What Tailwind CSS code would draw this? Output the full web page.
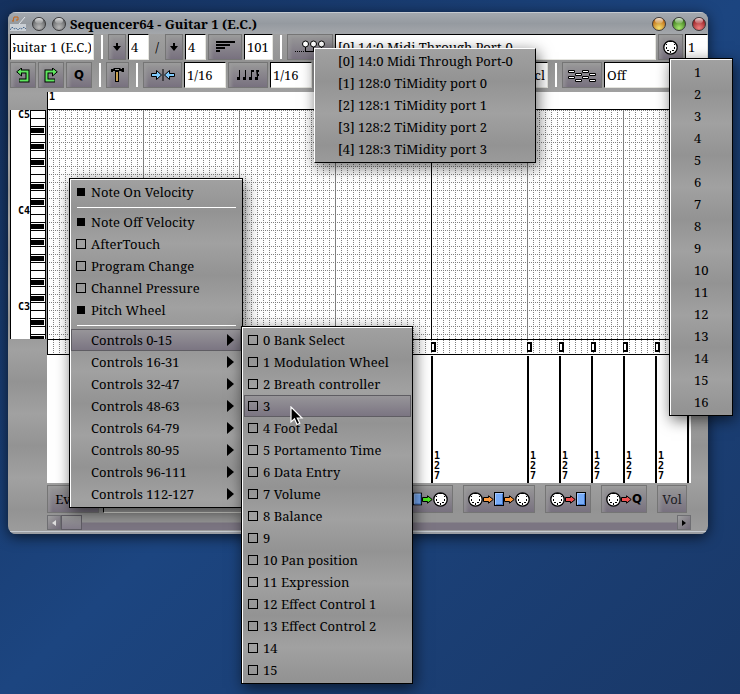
<!DOCTYPE html>
<html lang="en">
<head>
<meta charset="utf-8">
<title>Sequencer64 - Guitar 1 (E.C.)</title>
<script src="https://cdn.jsdelivr.net/npm/@tailwindcss/browser@4"></script>
</head>
<body class="bg-[#1a3d72] font-['Noto_Serif','Droid_Serif','DejaVu_Serif_Condensed','DejaVu_Serif',serif] text-[13px] leading-5 text-black">
<svg width="0" height="0" class="absolute">
  <defs>
    <symbol id="din" viewBox="0 0 15 15">
      <circle cx="7.500" cy="7.500" r="6.700" fill="#fff" stroke="#000" stroke-width="1.300"/>
      <path d="M3 7h1v2H3zM11 7h1v2h-1zM4 10h2v1H4zM9 10h2v1H9zM7 11h1v2H7zM6 1h3v1H6zM3 4h1v1H3zM11 4h1v1h-1z"/>
    </symbol>
    <symbol id="arrow" viewBox="0 0 11 9">
      <path d="M.5 2.500h5V.8L10.200 4.500 5.500 8.200V6.500h-5z" stroke="#000" stroke-width="1"/>
    </symbol>
    <symbol id="block" viewBox="0 0 10 14">
      <rect x=".5" y=".5" width="9" height="13" fill="#78acf8" stroke="#000"/>
      <path d="M1.500 12.500v-11h7" fill="none" stroke="#a9cbff"/>
      <path d="M8.500 2v10.500H2" fill="none" stroke="#3f73c8"/>
    </symbol>
    <pattern id="dots" width="6" height="8" patternUnits="userSpaceOnUse">
      <path d="M0 0h1v1H0zM2 0h1v1H2zM4 0h1v1H4zM0 2h1v1H0zM0 4h1v1H0zM0 6h1v1H0z" fill="#808080"/>
    </pattern>
    <pattern id="steps" width="6" height="2" patternUnits="userSpaceOnUse">
      <path d="M0 0h1v1H0z" fill="#808080"/>
    </pattern>
    <pattern id="octave" width="16" height="96" patternUnits="userSpaceOnUse">
      <rect width="16" height="96" fill="#fff"/>
      <path d="M0 0h16v1H0zM0 8h16v1H0zM0 16h16v1H0zM0 24h16v1H0zM0 32h16v1H0zM0 40h16v1H0zM0 48h16v1H0zM0 56h16v1H0zM0 64h16v1H0zM0 72h16v1H0zM0 80h16v1H0zM0 88h16v1H0zM0 0h1v96H0zM15 0h1v96h-1z"/>
      <path d="M1 18h13v5H1zM1 34h13v5H1zM1 50h13v5H1zM1 74h13v5H1zM1 90h13v5H1z"/>
    </pattern>
    <radialGradient id="gray" cx=".5" cy=".75" r=".7"><stop offset="0" stop-color="#b8b8b8"/><stop offset="1" stop-color="#5c5e60"/></radialGradient>
    <radialGradient id="amber" cx=".5" cy=".8" r=".75"><stop offset="0" stop-color="#f4e070"/><stop offset="1" stop-color="#b85c08"/></radialGradient>
    <radialGradient id="green" cx=".5" cy=".8" r=".75"><stop offset="0" stop-color="#a8e870"/><stop offset="1" stop-color="#2c6c10"/></radialGradient>
    <radialGradient id="red" cx=".5" cy=".8" r=".75"><stop offset="0" stop-color="#f08080"/><stop offset="1" stop-color="#8c1418"/></radialGradient>
    <linearGradient id="gloss" x2="0" y2="1"><stop offset="0" stop-color="#fff" stop-opacity=".85"/><stop offset="1" stop-color="#fff" stop-opacity=".1"/></linearGradient>
    <symbol id="lens" viewBox="0 0 16 16">
      <circle cx="8" cy="8" r="6.500" stroke="#3a3a3c" stroke-width="1"/>
      <ellipse cx="8" cy="4.800" rx="4" ry="2.800" fill="url(#gloss)"/>
    </symbol>
  </defs>
</svg>

<main class="relative min-h-screen overflow-hidden bg-linear-to-br from-[#15315e] via-[#1c4580] to-[#193868] pt-3">
  <section class="ml-2 mr-8 overflow-hidden rounded-lg bg-[repeating-linear-gradient(#999999_0,#a1a1a1_18px,#939393_50px,#999999_64px)] shadow-[0_3px_14px_rgba(0,0,0,0.65)]">
    <header class="flex h-[22px] items-center border-t border-[#c5cad0] bg-linear-to-b from-[#a3a8ae] via-[#959aa0] to-[#a4a7ab] pl-0.5 pr-px">
      <svg width="16" height="16" class="mr-px">
        <rect y="8" width="16" height="7" fill="#c9ced4"/>
        <path d="M0 14l2-3 2 2 2-1 2 2 2-2 2 1 2-2 2 2" fill="none" stroke="#42648c" stroke-dasharray="2 1"/>
        <path d="M9 8l6-7" stroke="#e4e8ec"/>
        <path d="M3 5l1-4h4v3M2 5h2M6 4h2" fill="none" stroke="#c86414"/>
      </svg>
      <button aria-label="Window menu" class="ml-0.5 size-5"><svg width="16" height="16" fill="url(#gray)" class="mx-auto"><use href="#lens"/></svg></button>
      <button aria-label="Stick" class="size-5"><svg width="16" height="16" fill="url(#gray)" class="mx-auto"><use href="#lens"/></svg></button>
      <h1 class="flex-1 pl-px text-[13px] font-bold">Sequencer64 - Guitar 1 (E.C.)</h1>
      <div class="flex pr-0">
        <button aria-label="Minimize" class="size-5"><svg width="16" height="16" fill="url(#amber)" class="ml-auto"><use href="#lens"/></svg></button>
        <button aria-label="Maximize" class="size-5"><svg width="16" height="16" fill="url(#green)" class="ml-auto"><use href="#lens"/></svg></button>
        <button aria-label="Close" class="size-5"><svg width="16" height="16" fill="url(#red)" class="ml-auto"><use href="#lens"/></svg></button>
      </div>
    </header>

    <div class="flex flex-col gap-0.5 pb-1 [&_button]:flex [&_button]:h-[26px] [&_button]:shrink-0 [&_button]:items-center [&_button]:justify-center [&_button]:border [&_button]:border-[#757575] [&_button]:bg-linear-to-b [&_button]:from-[#999999] [&_button]:to-[#78717f] [&_button]:shadow-[inset_3px_2px_3px_rgba(160,160,160,0.5)] [&_hr]:ml-[5px] [&_hr]:mr-[3px] [&_hr]:h-6 [&_hr]:w-0.5 [&_hr]:border-0 [&_hr]:bg-white [&_input]:h-[26px] [&_input]:min-w-0 [&_input]:border [&_input]:border-b-[#e4e4de] [&_input]:border-l-black [&_input]:border-r-[#e4e4de] [&_input]:border-t-black [&_input]:bg-white [&_input]:px-0.5">
      <div class="flex items-center gap-0.5 pl-0.5">
        <input aria-label="Sequence name" value="Guitar 1 (E.C.)" class="w-[84px] -indent-[6px]">
        <hr>
        <button aria-label="Beats per bar" class="w-[18px]"><svg width="8" height="8"><path d="M3 0h2v3h3L4 8 0 3h3z"/></svg></button>
        <input aria-label="Beats" value="4" class="w-[21px]">
        <span class="w-3 text-center">/</span>
        <button aria-label="Beat length" class="w-[18px]"><svg width="8" height="8"><path d="M3 0h2v3h3L4 8 0 3h3z"/></svg></button>
        <input aria-label="Beat unit" value="4" class="w-[21px]">
        <button aria-label="Measures" class="w-[34px]"><svg width="19" height="12"><path d="M0 0h19v2H0zM0 3h14v2H0zM0 6h9v2H0zM0 9h4v2H0z"/></svg></button>
        <input aria-label="Measure count" value="101" class="w-[29px]">
        <hr>
        <button aria-label="Output bus" class="w-[46px]"><svg width="30" height="14"><path d="M0 11.500h10" stroke="#000" stroke-dasharray="1 1"/><path d="M10 11.500h10M10.500 7v4M18.500 7v4M26.500 7v4" stroke="#000"/><g fill="#fff" stroke="#000"><circle cx="10.500" cy="4" r="3"/><circle cx="18.500" cy="4" r="3"/><circle cx="26.500" cy="4" r="3"/></g></svg></button>
        <input aria-label="Bus" value="[0] 14:0 Midi Through Port-0" class="flex-1">
        <button aria-label="Channel" class="w-[25px]"><svg width="15" height="15"><use href="#din"/></svg></button>
        <input aria-label="Channel number" value="1" class="w-[23px]">
      </div>
      <div class="flex items-center gap-0.5 pl-0.5">
        <button aria-label="Undo" class="w-[26px]"><svg width="14" height="15" fill="none"><path d="M5 3.500h6.500v9H3" stroke="#000" stroke-width="4"/><path d="M5.500 0v8L.7 3.800z" fill="#5fe65f" stroke="#000"/><path d="M4 3.500h7.500v9H3.500" stroke="#5fe65f" stroke-width="2"/></svg></button>
        <button aria-label="Redo" class="w-[26px]"><svg width="14" height="15" fill="none"><path d="M9 3.500H2.500v9H11" stroke="#000" stroke-width="4"/><path d="M8.500 0v8l4.800-4.200z" fill="#5fe65f" stroke="#000"/><path d="M10 3.500H2.500v9h8" stroke="#5fe65f" stroke-width="2"/></svg></button>
        <button aria-label="Quantize" class="w-[26px] font-['DejaVu_Sans_Condensed','DejaVu_Sans',sans-serif] font-bold">Q</button>
        <hr>
        <button aria-label="Tools" class="w-[23px]"><svg width="13" height="15"><path d="M0 1h2l1-1h6l1 1h1V0h2v4h-2l-1-1H8v1H4V3H2v1H0z"/><path d="M4 1h4v1H4z" fill="#999"/><path d="M4 4h4v10H4z"/><path d="M5 4h2v9H5z" fill="#c8a050"/></svg></button>
        <hr>
        <button aria-label="Snap" class="w-[39px]"><svg width="24" height="12"><g fill="#80ccff" stroke="#000"><path d="M.5 4.500h5V1.500l5 4.500-5 4.500v-3h-5z"/><path d="M23.500 4.500h-5V1.500l-5 4.500 5 4.500v-3h5z"/></g><path d="M11.500 0h1v12h-1z"/></svg></button>
        <input aria-label="Snap length" value="1/16" class="w-[42px]">
        <button aria-label="Note length" class="w-[40px]"><svg width="22" height="11"><path d="M2 0h1v10H0V7h2zM8 0h1v10H6V7h2zM14 0h3v2h-2v8h-3V7h2zM19 0h3v2h-1v2h1v2h-1v4h-3V7h2z"/></svg></button>
        <input aria-label="Note size" value="1/16" class="w-[42px]">
        <button aria-label="Zoom" class="w-[38px]"></button>
        <input aria-label="Zoom ratio" value="1:2" class="flex-1">
        <input aria-label="Scale" value="cl" class="w-[60px] text-right">
        <hr>
        <button aria-label="Chord" class="w-[40px]"><svg width="29" height="13"><g fill="#fff" stroke="#000"><path d="M.5 1.500h6v2h-6zM14.500 1.500h6v2h-6zM7.500 4.500h6v2h-6zM21.500 4.500h6v2h-6zM.5 7.500h6v2h-6zM14.500 7.500h6v2h-6zM7.500 10.500h6v2h-6zM21.500 10.500h6v2h-6z"/></g></svg></button>
        <input aria-label="Chord type" value="Off" class="w-[104px]">
      </div>
    </div>

    <div class="flex pl-0.5 pr-[17px]">
      <div class="w-[37px] shrink-0 pt-[18px]">
        <svg class="block h-[229px] w-[36px] border-l border-black bg-white font-['DejaVu_Sans_Mono',monospace] text-[10px] font-bold">
          <g transform="translate(19 0)" shape-rendering="crispEdges"><rect width="16" height="229" fill="url(#octave)"/></g>
          <text x="7" y="8">C5</text><text x="7" y="104">C4</text><text x="7" y="200">C3</text>
        </svg>
      </div>
      <div class="min-w-0 flex-1 bg-white font-['DejaVu_Sans_Mono',monospace] text-[10px] font-bold leading-[10px]">
        <div class="h-[18px] border-b border-l border-black pl-px">1</div>
        <svg class="block h-[229px] w-full" shape-rendering="crispEdges">
          <rect width="100%" height="100%" fill="url(#dots)"/>
          <path d="M96.500 0v229M192.500 0v229M288.500 0v229M480.500 0v229M576.500 0v229" stroke="#808080"/>
          <path d="M.5 0v229M384.500 0v229" stroke="#000"/>
        </svg>
        <svg class="block h-4 w-full border-y border-l border-black" shape-rendering="crispEdges">
          <g transform="translate(-1 0)"><rect width="100%" height="14" fill="url(#steps)"/></g>
          <g id="events"></g>
        </svg>
        <svg class="block h-[128px] w-full" id="velocities" shape-rendering="crispEdges"></svg>
      </div>
    </div>

    <div class="flex items-center gap-[10px] pb-0.5 pl-[39px] pr-[21px] pt-0.5 [&_button]:flex [&_button]:h-7 [&_button]:shrink-0 [&_button]:items-center [&_button]:justify-center [&_button]:border [&_button]:border-[#757575] [&_button]:bg-linear-to-b [&_button]:from-[#999999] [&_button]:to-[#78717f] [&_button]:shadow-[inset_3px_2px_3px_rgba(160,160,160,0.5)]">
      <div class="flex min-w-0 flex-1 gap-1">
        <button class="w-[52px]">Event</button>
        <input aria-label="Event type" value="Note On Velocity" class="h-7 min-w-0 flex-1 border border-b-[#e4e4de] border-l-black border-r-[#e4e4de] border-t-black bg-[#a0a0a0] px-1">
      </div>
      <button aria-label="Play" class="w-[46px]"><svg width="9" height="14"><use href="#block"/></svg><svg width="11" height="9" fill="#4be61e"><use href="#arrow"/></svg><svg width="15" height="15"><use href="#din"/></svg></button>
      <button aria-label="Thru" class="w-[72px]"><svg width="15" height="15"><use href="#din"/></svg><svg width="11" height="9" fill="#ff9a3c"><use href="#arrow"/></svg><svg width="10" height="14"><use href="#block"/></svg><svg width="11" height="9" fill="#ff9a3c"><use href="#arrow"/></svg><svg width="15" height="15"><use href="#din"/></svg></button>
      <button aria-label="Record" class="w-[46px]"><svg width="15" height="15"><use href="#din"/></svg><svg width="11" height="9" fill="#f05050"><use href="#arrow"/></svg><svg width="10" height="14"><use href="#block"/></svg></button>
      <button aria-label="Quantized record" class="w-[46px] font-['DejaVu_Sans_Condensed','DejaVu_Sans',sans-serif] font-bold"><svg width="15" height="15"><use href="#din"/></svg><svg width="11" height="9" fill="#f05050"><use href="#arrow"/></svg>Q</button>
      <button class="w-[30px] text-[#202024]">Vol</button>
    </div>

    <div class="pb-px pl-[39px] pr-[17px]">
      <div class="flex h-[15px] bg-linear-to-b from-[#959595] from-45% to-[#7b7582] to-55%">
        <button aria-label="Scroll left" class="flex w-[14px] items-center justify-center border border-[#6e6e72] bg-linear-to-br from-[#a0a0a0] to-[#716a78]"><svg width="4" height="6"><path d="M4 0v6L0 3z" fill="#ddd"/></svg></button>
        <div class="w-[21px] border border-[#5f5c64] bg-linear-to-b from-[#999] to-[#837d8a]"></div>
        <div class="flex-1"></div>
        <button aria-label="Scroll right" class="flex w-[14px] items-center justify-center border border-[#6e6e72] bg-linear-to-br from-[#a0a0a0] to-[#716a78]"><svg width="4" height="6"><path d="M0 0v6l4-3z"/></svg></button>
      </div>
    </div>
    <div class="h-[3px] border-t border-[#c5cad0] bg-[#9b9ea3]"></div>
  </section>

  <div role="menu" aria-label="Output bus" id="bus" class="absolute left-[314px] top-[48px] w-[222px] border border-b-black border-l-white border-r-black border-t-white bg-[repeating-linear-gradient(#a1a1a1_0,#939393_32px,#a1a1a1_64px)] pb-0.5 pt-px shadow-[2px_4px_14px_rgba(0,0,0,0.6)]"></div>

  <div role="menu" aria-label="Channel" id="channel" class="absolute left-[669px] top-[58px] w-[64px] border border-black bg-[repeating-linear-gradient(#a1a1a1_0,#939393_32px,#a1a1a1_64px)] py-0.5 shadow-[inset_1px_1px_0_white,2px_4px_14px_rgba(0,0,0,0.6)]"></div>

  <div role="menu" aria-label="Event" class="absolute left-[69px] top-[178px] w-[174px] border border-black bg-[repeating-linear-gradient(#a1a1a1_0,#939393_32px,#a1a1a1_64px)] py-0.5 shadow-[inset_1px_1px_0_white,2px_4px_14px_rgba(0,0,0,0.6)]">
    <div id="status"></div>
    <div id="banks"></div>
  </div>

  <div role="menu" aria-label="Controls 0-15" id="controls" class="absolute left-[241px] top-[326px] w-[172px] border border-black bg-[repeating-linear-gradient(#a1a1a1_0,#939393_32px,#a1a1a1_64px)] py-0.5 shadow-[inset_1px_1px_0_white,2px_4px_14px_rgba(0,0,0,0.6)]"></div>

  <svg class="absolute left-[290px] top-[406px]" width="14" height="20"><path d="M1 1v15l3.500-3.200L7 18.500l2.800-1.200-2.500-5.300H12z" fill="#000" stroke="#fff" stroke-width="1.200"/></svg>
</main>

<script>
const fill = (id, html) => { document.getElementById(id).innerHTML = html; };
const hot = 'border-[#5f5d63] bg-linear-to-b from-[#979599] to-[#7b7582]';
const cold = 'border-transparent';
const check = (name, on, active) =>
  `<label class="ml-0.5 mr-px flex h-[22px] items-center gap-[5px] border pl-[3px] whitespace-nowrap ${active ? hot : cold}">
    <input type="checkbox" ${on ? 'checked' : ''} class="size-[10px] appearance-none border border-black bg-clip-padding checked:border-transparent checked:bg-black">${name}</label>`;
const rule = '<hr class="mb-[3px] ml-[7px] mr-[6px] mt-1 h-px border-0 bg-white">';

fill('bus', ['[0] 14:0 Midi Through Port-0', '[1] 128:0 TiMidity port 0', '[2] 128:1 TiMidity port 1', '[3] 128:2 TiMidity port 2', '[4] 128:3 TiMidity port 3']
  .map(t => `<button role="menuitem" class="block h-[22px] w-full pl-[23px] text-left whitespace-nowrap">${t}</button>`).join(''));

fill('channel', Array.from({ length: 16 }, (_, i) =>
  `<button role="menuitem" class="block h-[22px] w-full pl-[24px] text-left">${i + 1}</button>`).join(''));

fill('status', check('Note On Velocity', true) + rule + check('Note Off Velocity', true) + check('AfterTouch')
  + check('Program Change') + check('Channel Pressure') + check('Pitch Wheel', true) + rule);

fill('banks', ['0-15', '16-31', '32-47', '48-63', '64-79', '80-95', '96-111', '112-127'].map((t, i) =>
  `<div class="px-px"><button role="menuitem" class="flex h-[22px] w-full items-center justify-between border pl-[19px] pr-[6px] ${i ? cold : hot}">Controls ${t}
    <svg width="7" height="12"><path d="M0 0v12l7-6z"/></svg></button></div>`).join(''));

fill('controls', ['0 Bank Select', '1 Modulation Wheel', '2 Breath controller', '3', '4 Foot Pedal', '5 Portamento Time', '6 Data Entry', '7 Volume', '8 Balance', '9', '10 Pan position', '11 Expression', '12 Effect Control 1', '13 Effect Control 2', '14', '15']
  .map((t, i) => check(t, false, i === 3)).join(''));

const hits = [384, 480, 512, 544, 576, 608, 640];
const labelled = hits.slice(0, -1);
fill('events', hits.slice(0, -1).map(x => `<rect x="${x - 1}" y="2" width="5" height="10"/><rect x="${x}" y="4" width="2" height="6" fill="#fff"/>`).join(''));
fill('velocities', hits.map(x => `<rect x="${x}" y="1" width="2" height="127"/>`).join('')
  + labelled.map(x => [...'127'].map((d, i) => `<text x="${x + 3}" y="${104 + i * 10}">${d}</text>`).join('')).join(''));
</script>
</body>
</html>
